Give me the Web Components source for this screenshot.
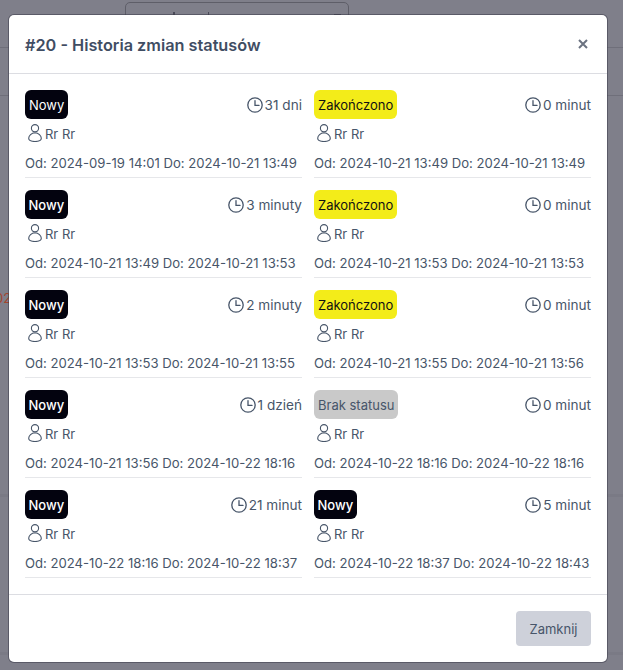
<!DOCTYPE html>
<html lang="pl">
<head>
<meta charset="utf-8">
<title>Historia zmian statusów</title>
<style>
	html, body {
		margin: 0;
		height: 100%;
	}
	body {
		font-family: Inter, "Liberation Sans", sans-serif;
		overflow: hidden;
	}
</style>
</head>
<body>

<template id="tpl-backdrop">
	<style>
		:host {
			display: block;
			position: relative;
			width: 623px;
			height: 670px;
			overflow: hidden;
			background: #7f7f8a;
		}
		.line {
			position: absolute;
			left: 0;
			right: 0;
			height: 1px;
			background: #6f6f7a;
		}
		.band {
			position: absolute;
			left: 0;
			right: 0;
			height: 3px;
			background: #7a7a85;
		}
		.pill {
			position: absolute;
			left: 125px;
			top: 2px;
			width: 222px;
			height: 30px;
			border: 1px solid #5e5e68;
			border-radius: 5px;
		}
		.mark {
			position: absolute;
			background: #4a4a58;
		}
		.red {
			position: absolute;
			left: -5px;
			top: 290px;
			font-size: 13px;
			line-height: 16px;
			color: #a5452f;
		}
	</style>
	<div class="pill"></div>
	<div class="mark" style="left:173px;top:12px;width:2px;height:3px"></div>
	<div class="mark" style="left:208px;top:12px;width:1px;height:3px"></div>
	<div class="mark" style="left:334px;top:14px;width:7px;height:1px"></div>
	<div class="line" style="top:47px"></div>
	<div class="line" style="top:95px"></div>
	<div class="band" style="top:494px"></div>
	<div class="band" style="top:652px"></div>
	<div class="red">02</div>
	<slot></slot>
</template>

<template id="tpl-modal">
	<style>
		:host {
			display: flex;
			flex-direction: column;
			position: absolute;
			left: 9px;
			top: 15px;
			width: 598px;
			height: 647px;
			background: #fff;
			border-radius: 5px;
			box-shadow: 0 0 0 1px rgba(60, 60, 75, .55);
			color: #475569;
		}
		header {
			flex: none;
			display: flex;
			align-items: center;
			justify-content: space-between;
			height: 58px;
			padding: 0 16px;
			border-bottom: 1px solid #dcdde2;
		}
		h2 {
			margin: 2px 0 0;
			font-size: 16.25px;
			font-weight: 600;
			color: #3f4d63;
		}
		.close {
			width: 10px;
			height: 10px;
			margin-right: 3px;
		}
		main {
			flex: 1;
			min-height: 0;
			padding: 16px 16px 0;
		}
		.grid {
			display: grid;
			grid-template-columns: 277px 277px;
			column-gap: 12px;
		}
		footer {
			flex: none;
			display: flex;
			justify-content: flex-end;
			padding: 16px;
			border-top: 1px solid #dcdde2;
		}
		button {
			width: 75px;
			height: 35px;
			border: 0;
			border-radius: 4px;
			background: #ced1da;
			color: #475569;
			font: 400 13px Inter, "Liberation Sans", sans-serif;
		}
	</style>
	<header>
		<h2><slot name="title"></slot></h2>
		<svg class="close" viewBox="0 0 10 10" fill="none" stroke="#6b7280" stroke-width="2">
			<path d="M1 1l8 8M9 1l-8 8"/>
		</svg>
	</header>
	<main><div class="grid"><slot></slot></div></main>
	<footer><button>Zamknij</button></footer>
</template>

<template id="tpl-entry">
	<style>
		:host {
			display: block;
			height: 87px;
			margin-bottom: 12px;
			border-bottom: 1px solid #e6e7ea;
			font-size: 13.12px;
			color: #475569;
		}
		.top {
			display: flex;
			align-items: center;
			justify-content: space-between;
			height: 29px;
		}
		.time, .user {
			display: flex;
			align-items: center;
		}
		.time {
			font-size: 13.6px;
		}
		.time svg {
			width: 16px;
			height: 16px;
			margin-right: 2px;
		}
		.user {
			height: 18px;
			margin-top: 6px;
			padding-left: 3px;
			font-size: 13px;
		}
		.user svg {
			width: 14px;
			height: 18px;
			margin: -2px 3px 0 0;
		}
		.dates {
			margin-top: 11px;
			line-height: 18px;
			white-space: nowrap;
		}
	</style>
	<div class="top">
		<slot name="badge"></slot>
		<span class="time">
			<svg viewBox="0 0 16 16" fill="none" stroke="#475569" stroke-width="1.3" stroke-linecap="round">
				<circle cx="8" cy="8" r="7.2"/>
				<path d="M8 3.6v4.8h4"/>
			</svg>
			<span id="dur"></span>
		</span>
	</div>
	<div class="user">
		<svg viewBox="0 0 14 18" fill="none" stroke="#475569" stroke-width="1.1">
			<circle cx="7" cy="4.2" r="3.6"/>
			<path d="M7 8.7C3.5 8.9 .7 11.6 .7 14.3C.7 16.6 3.5 17.5 7 17.5C10.5 17.5 13.3 16.6 13.3 14.3C13.3 11.6 10.5 8.9 7 8.7Z"/>
		</svg>
		<span id="who"></span>
	</div>
	<div class="dates">Od: <span id="from"></span> Do: <span id="to"></span></div>
</template>

<template id="tpl-badge">
	<style>
		:host {
			display: inline-flex;
			align-items: center;
			justify-content: center;
			height: 29px;
			padding: 0 4px;
			border-radius: 6px;
			font-size: 13px;
			background: var(--badge-bg, #03030f);
			color: var(--badge-fg, #fff);
		}
		:host([kind="new"]) {
			font-weight: 500;
			padding: 0 3.5px;
		}
		:host([plain]) {
			font-weight: 400;
			padding: 0 4px;
		}
		:host([kind="done"]) {
			--badge-bg: #f3ec19;
			--badge-fg: #111;
		}
		:host([kind="none"]) {
			--badge-bg: #c9c9c9;
			--badge-fg: #475569;
		}
	</style>
	<slot></slot>
</template>

<history-backdrop>
	<history-modal id="modal">
		<span slot="title">#20 - Historia zmian statusów</span>
	</history-modal>
</history-backdrop>

<script>
function fromTemplate(el, id) {
	el.attachShadow({mode: 'open'}).appendChild(document.getElementById(id).content.cloneNode(true));
}

customElements.define('history-backdrop', class extends HTMLElement {
	constructor() {
		super();
		fromTemplate(this, 'tpl-backdrop');
	}
});

customElements.define('history-modal', class extends HTMLElement {
	constructor() {
		super();
		fromTemplate(this, 'tpl-modal');
	}
});

customElements.define('status-badge', class extends HTMLElement {
	constructor() {
		super();
		fromTemplate(this, 'tpl-badge');
	}
});

customElements.define('history-entry', class extends HTMLElement {
	constructor() {
		super();
		fromTemplate(this, 'tpl-entry');
	}

	connectedCallback() {
		for (const k of ['dur', 'who', 'from', 'to']) {
			this.shadowRoot.getElementById(k).textContent = this.getAttribute(k);
		}
	}
});

const labels = {new: 'Nowy', done: 'Zakończono', none: 'Brak statusu'};

// kolejnosc: lewa kolumna, prawa kolumna, wiersz po wierszu
const rows = [
	['new', '31 dni', '2024-09-19 14:01', '2024-10-21 13:49'],
	['done', '0 minut', '2024-10-21 13:49', '2024-10-21 13:49'],
	['new', '3 minuty', '2024-10-21 13:49', '2024-10-21 13:53'],
	['done', '0 minut', '2024-10-21 13:53', '2024-10-21 13:53'],
	['new', '2 minuty', '2024-10-21 13:53', '2024-10-21 13:55'],
	['done', '0 minut', '2024-10-21 13:55', '2024-10-21 13:56'],
	['new', '1 dzień', '2024-10-21 13:56', '2024-10-22 18:16'],
	['none', '0 minut', '2024-10-22 18:16', '2024-10-22 18:16'],
	['new', '21 minut', '2024-10-22 18:16', '2024-10-22 18:37'],
	['new', '5 minut', '2024-10-22 18:37', '2024-10-22 18:43'],
];

const modal = document.getElementById('modal');
rows.forEach(([kind, dur, from, to], i) => {
	const e = document.createElement('history-entry');
	e.setAttribute('dur', dur);
	e.setAttribute('who', 'Rr Rr');
	e.setAttribute('from', from);
	e.setAttribute('to', to);
	const b = document.createElement('status-badge');
	b.slot = 'badge';
	b.setAttribute('kind', kind);
	if (i == 0) {
		b.setAttribute('plain', '');
	}
	b.textContent = labels[kind];
	e.appendChild(b);
	modal.appendChild(e);
});
</script>
</body>
</html>
